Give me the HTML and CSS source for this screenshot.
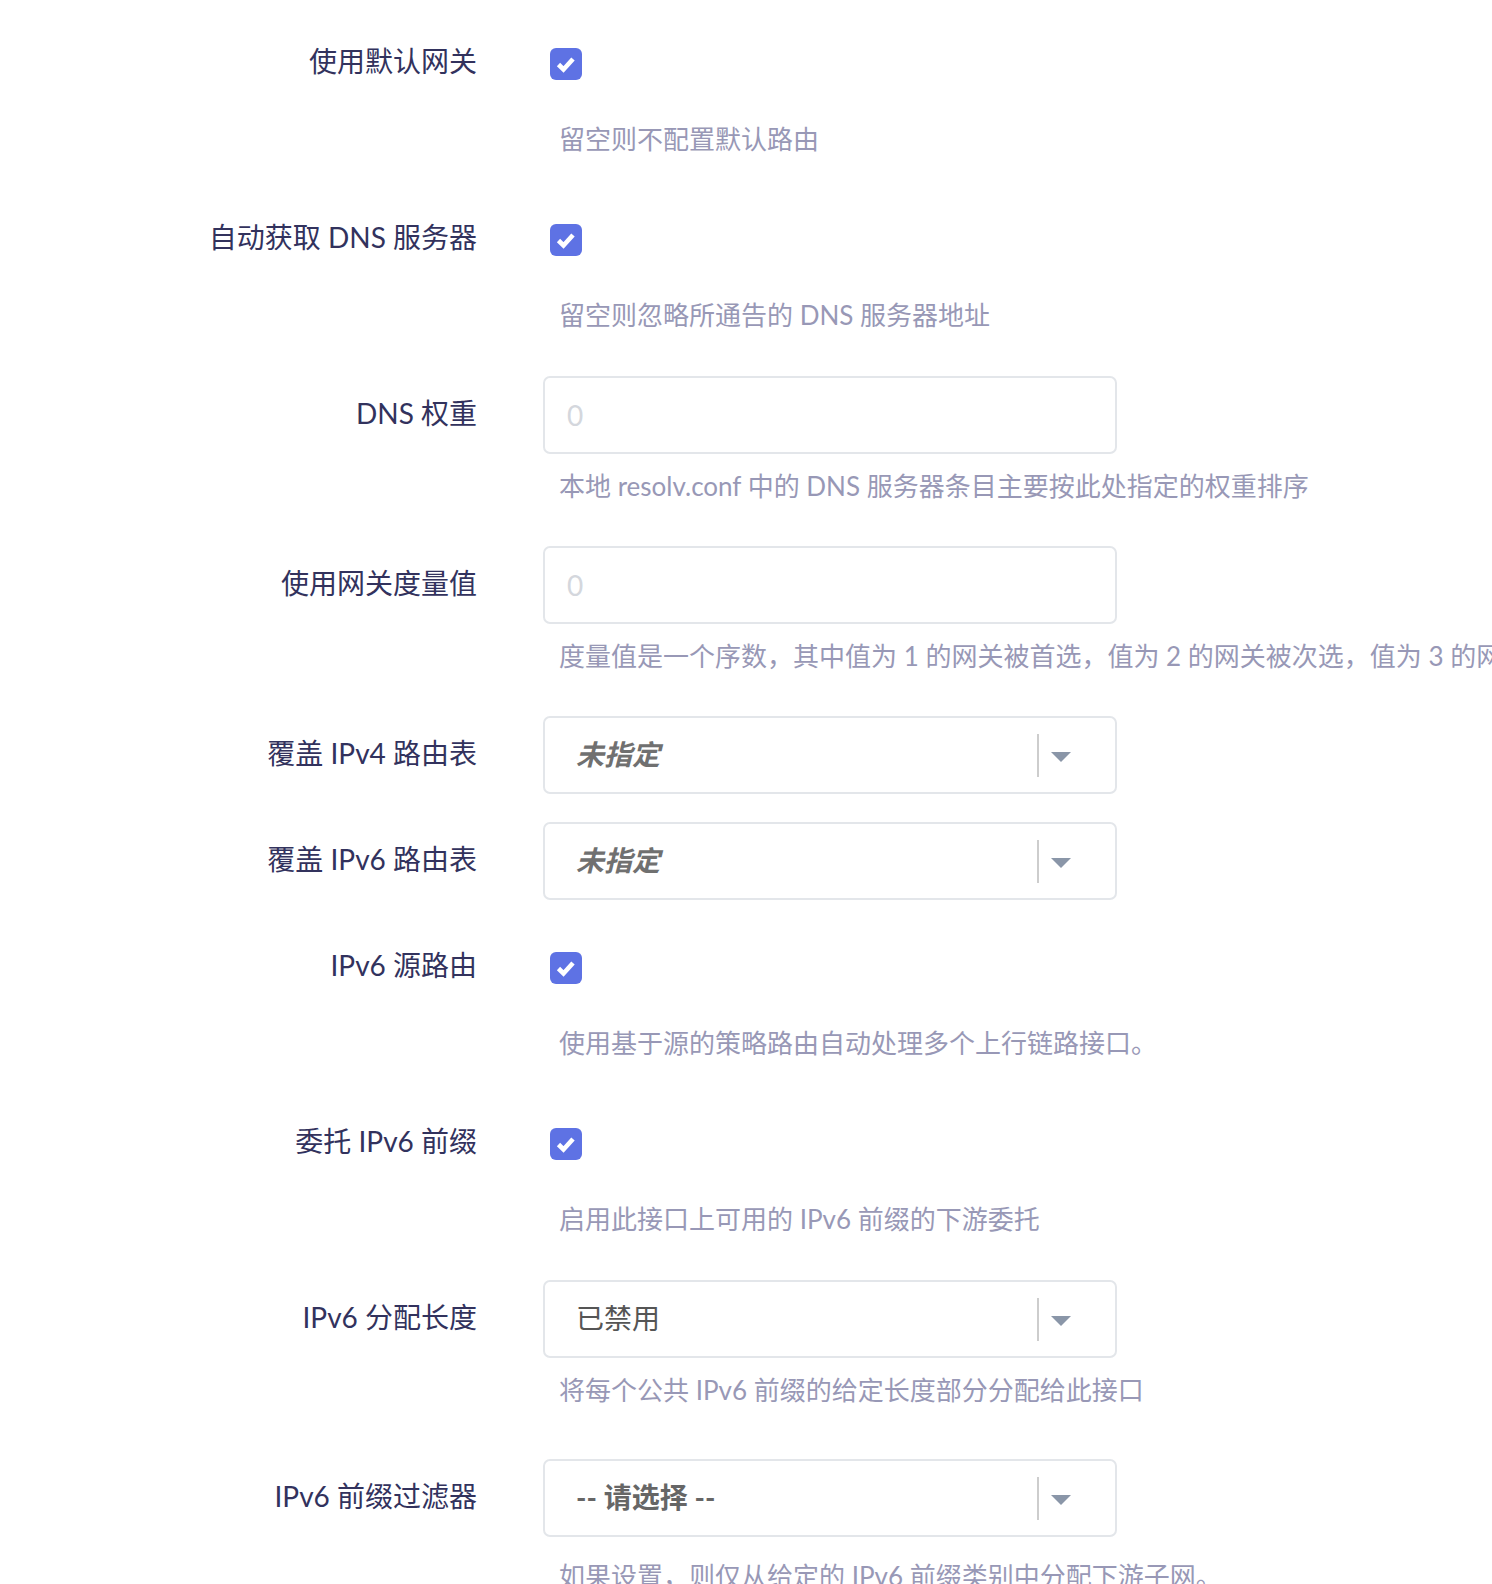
FILE: index.html
```html
<!DOCTYPE html>
<html lang="zh-CN">
<head>
    <meta charset="UTF-8">
    <meta name="viewport" content="width=device-width, initial-scale=1.0">
    <title>接口设置</title>
    <link rel="stylesheet" href="styles.css">
</head>
<body>
    <div class="cbi-section">
        <div class="cbi-value check-row">
            <label class="cbi-label">使用默认网关</label>
            <div class="cbi-field">
                <div class="check-wrap">
                    <span class="check">
                        <svg width="32" height="32" viewBox="0 0 32 32"><path d="M8.5 16.5 L13.5 21.5 L23 11" fill="none" stroke="#fff" stroke-width="4.6"/></svg>
                    </span>
                </div>
                <div class="help">留空则不配置默认路由</div>
            </div>
        </div>

        <div class="cbi-value check-row">
            <label class="cbi-label">自动获取 DNS 服务器</label>
            <div class="cbi-field">
                <div class="check-wrap">
                    <span class="check">
                        <svg width="32" height="32" viewBox="0 0 32 32"><path d="M8.5 16.5 L13.5 21.5 L23 11" fill="none" stroke="#fff" stroke-width="4.6"/></svg>
                    </span>
                </div>
                <div class="help">留空则忽略所通告的 DNS 服务器地址</div>
            </div>
        </div>

        <div class="cbi-value">
            <label class="cbi-label">DNS 权重</label>
            <div class="cbi-field">
                <input class="text-input" type="text" placeholder="0">
                <div class="help">本地 resolv.conf 中的 DNS 服务器条目主要按此处指定的权重排序</div>
            </div>
        </div>

        <div class="cbi-value">
            <label class="cbi-label">使用网关度量值</label>
            <div class="cbi-field">
                <input class="text-input" type="text" placeholder="0">
                <div class="help">度量值是一个序数，其中值为 1 的网关被首选，值为 2 的网关被次选，值为 3 的网关被第三选，以此类推</div>
            </div>
        </div>

        <div class="cbi-value">
            <label class="cbi-label">覆盖 IPv4 路由表</label>
            <div class="cbi-field">
                <div class="select">
                    <span class="select-value unset">未指定</span>
                    <span class="select-sep"></span>
                    <span class="select-arrow"></span>
                </div>
            </div>
        </div>

        <div class="cbi-value">
            <label class="cbi-label">覆盖 IPv6 路由表</label>
            <div class="cbi-field">
                <div class="select">
                    <span class="select-value unset">未指定</span>
                    <span class="select-sep"></span>
                    <span class="select-arrow"></span>
                </div>
            </div>
        </div>

        <div class="cbi-value check-row">
            <label class="cbi-label">IPv6 源路由</label>
            <div class="cbi-field">
                <div class="check-wrap">
                    <span class="check">
                        <svg width="32" height="32" viewBox="0 0 32 32"><path d="M8.5 16.5 L13.5 21.5 L23 11" fill="none" stroke="#fff" stroke-width="4.6"/></svg>
                    </span>
                </div>
                <div class="help">使用基于源的策略路由自动处理多个上行链路接口。</div>
            </div>
        </div>

        <div class="cbi-value check-row">
            <label class="cbi-label">委托 IPv6 前缀</label>
            <div class="cbi-field">
                <div class="check-wrap">
                    <span class="check">
                        <svg width="32" height="32" viewBox="0 0 32 32"><path d="M8.5 16.5 L13.5 21.5 L23 11" fill="none" stroke="#fff" stroke-width="4.6"/></svg>
                    </span>
                </div>
                <div class="help">启用此接口上可用的 IPv6 前缀的下游委托</div>
            </div>
        </div>

        <div class="cbi-value spaced">
            <label class="cbi-label">IPv6 分配长度</label>
            <div class="cbi-field">
                <div class="select">
                    <span class="select-value">已禁用</span>
                    <span class="select-sep"></span>
                    <span class="select-arrow"></span>
                </div>
                <div class="help">将每个公共 IPv6 前缀的给定长度部分分配给此接口</div>
            </div>
        </div>

        <div class="cbi-value">
            <label class="cbi-label">IPv6 前缀过滤器</label>
            <div class="cbi-field">
                <div class="select">
                    <span class="select-value choose">-- 请选择 --</span>
                    <span class="select-sep"></span>
                    <span class="select-arrow"></span>
                </div>
                <div class="help help-low">如果设置，则仅从给定的 IPv6 前缀类别中分配下游子网。</div>
            </div>
        </div>
    </div>
</body>
</html>
```

FILE: styles.css
```css
body {
    margin: 0;
    background: #fff;
    overflow-x: hidden;
    font-family: "Lato", "Noto Sans CJK SC", sans-serif;
}

.cbi-section {
    padding-top: 24px;
}

.cbi-value {
    display: flex;
    margin-bottom: 28px;
}

.cbi-value.check-row {
    margin-bottom: 29px;
}

.cbi-value.spaced {
    margin-bottom: 37px;
}

.cbi-label {
    flex-shrink: 0;
    width: 477px;
    text-align: right;
    line-height: 74px;
    font-size: 28px;
    color: #32325d;
}

.cbi-field {
    margin-left: 66px;
    width: 574px;
}

.check-wrap {
    box-sizing: border-box;
    height: 76px;
    display: flex;
    align-items: center;
    padding: 4px 0 0 7px;
}

.check {
    display: block;
    width: 32px;
    height: 32px;
    border-radius: 6px;
    background-color: #5e72e4;
}

.check svg {
    display: block;
}

.text-input {
    display: block;
    box-sizing: border-box;
    width: 100%;
    height: 78px;
    margin: 0;
    padding: 0 22px;
    border: 2px solid #e3e6ea;
    border-radius: 7px;
    font-family: inherit;
    font-size: 28px;
    color: #32325d;
    outline: none;
}

.text-input::placeholder {
    color: #d4d7dd;
}

.select {
    box-sizing: border-box;
    height: 78px;
    display: flex;
    align-items: center;
    padding-left: 31px;
    border: 2px solid #e3e6ea;
    border-radius: 7px;
}

.select-value {
    flex: 1;
    margin-top: -4px;
    font-size: 28px;
    color: #555;
}

.select-value.unset {
    font-style: italic;
    font-weight: bold;
    color: #707070;
}

.select-value.choose {
    font-weight: bold;
    color: #666;
}

.select-sep {
    width: 2px;
    height: 43px;
    background-color: #cdcdcd;
}

.select-arrow {
    width: 0;
    height: 0;
    margin: 3px 44px 0 12px;
    border-left: 10px solid transparent;
    border-right: 10px solid transparent;
    border-top: 10px solid #8a96a8;
}

.help {
    margin: 13px 0 13px;
    padding-left: 16px;
    line-height: 38px;
    font-size: 26px;
    color: #9898b6;
    white-space: nowrap;
}

.check-row .help {
    margin-top: 20px;
}

.help.help-low {
    margin-top: 20px;
}
```
